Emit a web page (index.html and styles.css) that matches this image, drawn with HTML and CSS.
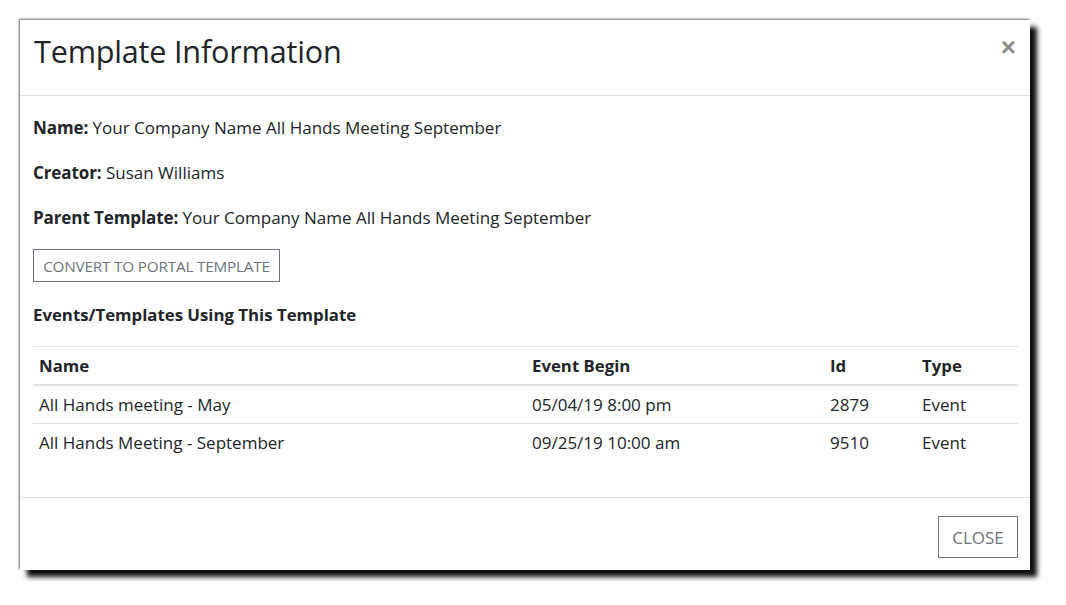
FILE: index.html
```html
<!DOCTYPE html>
<html>
<head>
<meta charset="utf-8">
<link rel="stylesheet" href="styles.css">
</head>
<body>
<div class="modal">
  <div class="modal-header">
    <h1 class="modal-title">Template Information</h1>
    <span class="close-x">&times;</span>
  </div>
  <div class="modal-body">
    <p class="info"><b>Name:</b> Your Company Name All Hands Meeting September</p>
    <p class="info"><b>Creator:</b> Susan Williams</p>
    <p class="info"><b>Parent Template:</b> Your Company Name All Hands Meeting September</p>
    <button class="btn btn-convert">CONVERT TO PORTAL TEMPLATE</button>
    <h2 class="section-title">Events/Templates Using This Template</h2>
    <table class="tbl">
      <thead>
        <tr><th class="c-name">Name</th><th class="c-begin">Event Begin</th><th class="c-id">Id</th><th class="c-type">Type</th></tr>
      </thead>
      <tbody>
        <tr><td>All Hands meeting - May</td><td>05/04/19 8:00 pm</td><td>2879</td><td>Event</td></tr>
        <tr><td>All Hands Meeting - September</td><td>09/25/19 10:00 am</td><td>9510</td><td>Event</td></tr>
      </tbody>
    </table>
  </div>
  <div class="modal-footer">
    <button class="btn btn-close">CLOSE</button>
  </div>
</div>
</body>
</html>
```
FILE: styles.css
```css
html, body {
  margin: 0;
  padding: 0;
  background: #ffffff;
}
body {
  font-family: "Open Sans", "Noto Sans", sans-serif;
  color: #212529;
  padding: 20px 0 0 20px;
  min-height: 605px;
  box-sizing: border-box;
}
.modal {
  width: 1010px;
  height: 550px;
  background: #fff;
  box-shadow: 7px 7px 5px rgba(0,0,0,0.95), -1px -1px 2px rgba(0,0,0,0.6);
  display: flex;
  flex-direction: column;
  box-sizing: border-box;
}
.modal-header {
  height: 76px;
  box-sizing: border-box;
  border-bottom: 1px solid #dee2e6;
  display: flex;
  align-items: flex-start;
  justify-content: space-between;
  padding: 12px 14px 0 14px;
}
.modal-title {
  margin: 0;
  font-size: 30.6px;
  font-weight: 400;
  line-height: 38px;
  letter-spacing: -0.2px;
}
.close-x {
  font-size: 26px;
  line-height: 26px;
  color: #8c8c8c;
  font-weight: 700;
  margin-top: 2px;
  font-family: "Liberation Sans", sans-serif;
}
.modal-body {
  flex: 1;
  padding: 20px 12px 0 13px;
}
.info {
  margin: 0 0 21px 0;
  font-size: 17px;
  line-height: 24px;
}
.info b { font-weight: 700; letter-spacing: -0.1px; }
.btn {
  background: #fff;
  border: 1px solid #6c757d;
  color: #6c757d;
  font-family: "Open Sans", "Noto Sans", sans-serif;
  border-radius: 0;
  cursor: pointer;
  display: block;
}
.btn-convert {
  margin-top: -2px;
  height: 33px;
  width: 247px;
  font-size: 15.3px;
  padding: 0;
  letter-spacing: -0.2px;
}
.section-title {
  margin: 21px 0 19px 0;
  font-size: 16.8px;
  line-height: 24px;
  font-weight: 700;
}
.tbl {
  width: 100%;
  border-collapse: collapse;
  font-size: 17px;
}
.tbl th, .tbl td {
  text-align: left;
  padding: 0 6px;
  border-top: 1px solid #dee2e6;
  line-height: 24px;
}
.tbl th {
  height: 37px;
  font-weight: 700;
  font-size: 16.8px;
  border-bottom: 2px solid #dee2e6;
  vertical-align: middle;
}
.tbl td {
  height: 37px;
  vertical-align: middle;
}
.tbl tbody tr:first-child td { border-top: 0; }
.c-name { width: 481px; }
.c-begin { width: 286px; }
.c-id { width: 80px; }
.modal-footer {
  height: 73px;
  box-sizing: border-box;
  border-top: 1px solid #dee2e6;
  display: flex;
  justify-content: flex-end;
  align-items: flex-start;
  padding: 18px 12px 0 0;
}
.btn-close {
  width: 80px;
  height: 42px;
  font-size: 17px;
  padding: 0;
}
```
